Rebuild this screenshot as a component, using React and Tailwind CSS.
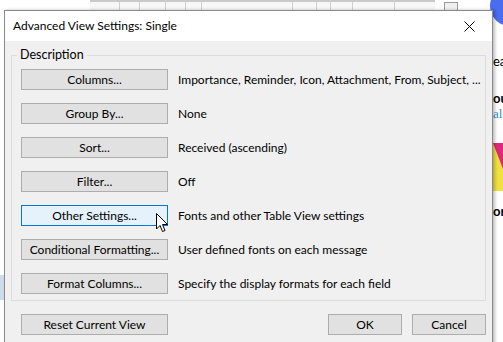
import React from "react";

const rows = [
  { label: "Columns...", text: "Importance, Reminder, Icon, Attachment, From, Subject, ..." },
  { label: "Group By...", text: "None" },
  { label: "Sort...", text: "Received (ascending)" },
  { label: "Filter...", text: "Off" },
  { label: "Other Settings...", text: "Fonts and other Table View settings", hover: true },
  { label: "Conditional Formatting...", text: "User defined fonts on each message" },
  { label: "Format Columns...", text: "Specify the display formats for each field" },
];

const WinButton = ({ children, hover, className = "" }) => (
  <button
    className={
      "h-[21px] border text-[12px] leading-none text-black flex items-center justify-center " +
      (hover ? "bg-[#e5f1fb] border-[#0078d7] " : "bg-[#e1e1e1] border-[#adadad] ") +
      className
    }
  >
    {children}
  </button>
);

// mouse pointer drawn over the hovered button
const Cursor = () => (
  <svg width="13" height="20" viewBox="0 0 13 20" className="absolute left-[151px] top-[202px]">
    <path d="M0.5 0.5 L0.5 16 L4 12.5 L6.5 18.5 L9 17.5 L6.5 11.5 L11.5 11.5 Z" fill="#fff" stroke="#000" strokeWidth="1" />
  </svg>
);

export default function App() {
  return (
    <div
      className="relative w-[503px] h-[342px] overflow-hidden bg-white"
      style={{ fontFamily: 'Lato, "Noto Sans", sans-serif' }}
    >
      {/* outlook behind the dialog */}
      <div className="absolute left-[90px] top-0 w-[345px] h-[10px] border-t-2 border-[#c9c9c9] bg-[#f7f7f7] flex">
        <div className="w-[30px] border-r border-[#cfcfcf]" />
        <div className="w-[20px] border-r border-[#cfcfcf]" />
        <div className="w-[26px] border-r border-[#cfcfcf]" />
        <div className="w-[20px] border-r border-[#cfcfcf]" />
        <div className="w-[16px] border-r border-[#cfcfcf]" />
        <div className="w-[91px] border-r border-[#cfcfcf]" />
        <div className="w-[24px] border-r border-[#cfcfcf]" />
        <div className="w-[14px] border-r border-[#cfcfcf]" />
        <div className="w-[22px] border-r border-[#cfcfcf]" />
        <div className="w-[42px] border-r border-[#cfcfcf]" />
      </div>
      <div className="absolute left-[444px] top-[2px] w-[14px] h-[10px] border border-[#9a9a9a] bg-[#f0f0f0]" />
      <div className="absolute left-[490px] top-[-14px] w-[40px] h-[40px] rounded-full bg-[#4a6cf0]" />
      <div className="absolute left-[493px] top-[52px] text-[13px] text-black">ea</div>
      <div className="absolute left-[493px] top-[89px] text-[13px] font-bold text-black">ou</div>
      <div className="absolute left-[493px] top-[104px] text-[13px] text-[#2b8fd6]" style={{ fontFamily: '"Liberation Serif", serif' }}>al</div>
      <div className="absolute left-[493px] top-[143px] w-[10px] h-[48px] bg-[#f0e040]" />
      <div className="absolute left-[493px] top-[143px] w-0 h-0 border-l-[10px] border-l-transparent border-t-[26px] border-t-[#e0287a]" />
      <div className="absolute left-[493px] top-[202px] text-[13px] font-bold text-black">or</div>
      <div className="absolute left-0 top-[275px] w-[4px] h-[25px] bg-[#cfdceb]" />

      {/* dialog window */}
      <div className="absolute left-[4px] top-[10px] w-[489px] h-[340px] border border-[#8a8a8a] bg-[#f0f0f0] shadow-[2px_0_3px_rgba(0,0,0,0.25)]">
        <div className="h-[30px] bg-white flex items-center justify-between pl-[8px]">
          <span className="text-[12px] text-black">Advanced View Settings: Single</span>
          <div className="w-[46px] h-[30px] flex items-center justify-center">
            <svg width="11" height="11" viewBox="0 0 11 11">
              <path d="M0.5 0.5 L10.5 10.5 M10.5 0.5 L0.5 10.5" stroke="#000" strokeWidth="1" />
            </svg>
          </div>
        </div>

        <div className="px-[6px] pt-[6px]">
          <fieldset className="border border-[#dcdcdc] pt-[6px] pb-[6px]">
            <legend className="ml-[5px] px-[3px] text-[12.5px] leading-[16px] text-black">Description</legend>
            <div className="flex flex-col gap-[13px] pl-[9px]">
              {rows.map((r) => (
                <div key={r.label} className="flex items-center gap-[10px]">
                  <WinButton hover={r.hover} className="w-[147px]">{r.label}</WinButton>
                  <span className="text-[12px] text-black whitespace-nowrap">{r.text}</span>
                </div>
              ))}
            </div>
          </fieldset>

          <div className="mt-[13px] flex items-center">
            <WinButton className="w-[147px] ml-[10px]">Reset Current View</WinButton>
            <div className="ml-auto flex gap-[10px]">
              <WinButton className="w-[74px]">OK</WinButton>
              <WinButton className="w-[74px]">Cancel</WinButton>
            </div>
          </div>
        </div>
        <Cursor />
      </div>
    </div>
  );
}
